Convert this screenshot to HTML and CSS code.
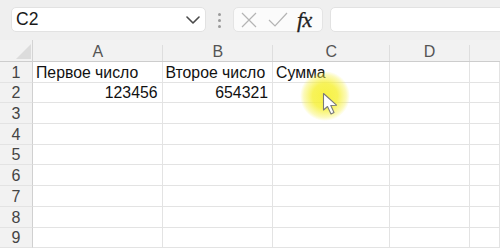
FILE: index.html
```html
<!DOCTYPE html>
<html lang="ru">
<head>
<meta charset="utf-8">
<link rel="stylesheet" href="styles.css">
</head>
<body>
<div class="toolbar">
  <div class="namebox">
    <span class="ref">C2</span>
    <svg class="chev" width="14" height="8" viewBox="0 0 14 8"><path d="M1 1 L7 7 L13 1" fill="none" stroke="#4a4a4a" stroke-width="1.6" stroke-linecap="round" stroke-linejoin="round"/></svg>
  </div>
  <div class="dots"><i></i><i></i><i></i></div>
  <div class="fbtns">
    <svg class="ico" width="18" height="16" viewBox="0 0 18 16"><path d="M2 1 L16 15 M16 1 L2 15" fill="none" stroke="#b4b4b4" stroke-width="1.2"/></svg>
    <svg class="ico chk" width="20" height="16" viewBox="0 0 20 16"><path d="M1 8 L7 14 L19 1" fill="none" stroke="#b4b4b4" stroke-width="1.2"/></svg>
    <span class="fx">fx</span>
  </div>
  <div class="finput"></div>
</div>
<div class="sheet">
  <div class="corner"><span class="tri"></span></div>
  <div class="colh">A</div>
  <div class="colh">B</div>
  <div class="colh">C</div>
  <div class="colh">D</div>
  <div class="colh last"></div>

  <div class="rowh">1</div>
  <div class="cell">Первое число</div>
  <div class="cell">Второе число</div>
  <div class="cell">Сумма</div>
  <div class="cell"></div>
  <div class="cell"></div>

  <div class="rowh">2</div>
  <div class="cell num">123456</div>
  <div class="cell num">654321</div>
  <div class="cell"></div>
  <div class="cell"></div>
  <div class="cell"></div>

  <div class="rowh">3</div><div class="cell"></div><div class="cell"></div><div class="cell"></div><div class="cell"></div><div class="cell"></div>
  <div class="rowh">4</div><div class="cell"></div><div class="cell"></div><div class="cell"></div><div class="cell"></div><div class="cell"></div>
  <div class="rowh">5</div><div class="cell"></div><div class="cell"></div><div class="cell"></div><div class="cell"></div><div class="cell"></div>
  <div class="rowh">6</div><div class="cell"></div><div class="cell"></div><div class="cell"></div><div class="cell"></div><div class="cell"></div>
  <div class="rowh">7</div><div class="cell"></div><div class="cell"></div><div class="cell"></div><div class="cell"></div><div class="cell"></div>
  <div class="rowh">8</div><div class="cell"></div><div class="cell"></div><div class="cell"></div><div class="cell"></div><div class="cell"></div>
  <div class="rowh">9</div><div class="cell"></div><div class="cell"></div><div class="cell"></div><div class="cell"></div><div class="cell"></div>
</div>
<div class="glow"></div>
<svg class="cursor" width="20" height="26" viewBox="0 0 20 26"><path d="M1.5 1.5 L1.5 18 L5.5 14.5 L9 22 L12 20.5 L8.8 13.5 L14.5 13.2 Z" fill="#ffffff" stroke="#7a7a7a" stroke-width="1.1" stroke-linejoin="round"/></svg>
</body>
</html>
```
FILE: styles.css
```css
html, body {
  margin: 0;
  padding: 0;
  background: #ffffff;
  width: 500px;
  height: 250px;
  overflow: hidden;
  font-family: "Liberation Sans", Arial, sans-serif;
}

.toolbar {
  height: 40px;
  background: #efefef;
  display: flex;
  align-items: flex-start;
  padding: 7px 0 0 11px;
  box-sizing: border-box;
}

.namebox {
  width: 195px;
  height: 25px;
  background: #ffffff;
  border: 1px solid #e2e2e2;
  border-radius: 5px;
  box-sizing: border-box;
  display: flex;
  align-items: center;
  justify-content: space-between;
  padding: 0 5px 0 4px;
}

.ref {
  font-size: 17.5px;
  color: #1a1a1a;
  line-height: 1;
}

.chev {
  display: block;
}

.dots {
  width: 4px;
  margin-left: 12px;
  display: flex;
  flex-direction: column;
  gap: 3px;
  padding-top: 6px;
}

.dots i {
  display: block;
  width: 3px;
  height: 3px;
  border-radius: 50%;
  background: #9a9a9a;
}

.fbtns {
  margin-left: 11px;
  width: 90px;
  height: 25px;
  background: #fbfbfb;
  border: 1px solid #e4e4e4;
  border-radius: 5px;
  box-sizing: border-box;
  display: flex;
  align-items: center;
  padding-left: 6px;
}

.ico {
  display: block;
}

.chk {
  margin-left: 10px;
}

.fx {
  margin-left: 9px;
  font-family: "Liberation Serif", "Times New Roman", serif;
  font-style: italic;
  font-size: 22px;
  color: #222222;
  line-height: 1;
  letter-spacing: -0.5px;
  -webkit-text-stroke: 0.3px #222222;
}

.finput {
  flex: 1;
  margin-left: 7px;
  margin-right: -8px;
  height: 25px;
  background: #ffffff;
  border: 1px solid #e2e2e2;
  border-radius: 5px;
  box-sizing: border-box;
}

.sheet {
  display: grid;
  grid-template-columns: 33px 129.5px 110.5px 116.5px 80px 1fr;
  grid-template-rows: 22px;
  grid-auto-rows: 20.7px;
}

.corner {
  background: #f2f2f2;
  border-bottom: 1px solid #cdcdcd;
  border-right: 1px solid #d4d4d4;
  position: relative;
}

.tri {
  position: absolute;
  right: 1px;
  bottom: 2px;
  width: 0;
  height: 0;
  border-left: 15px solid transparent;
  border-bottom: 15px solid #dcdcdc;
}

.colh {
  background: #f2f2f2;
  border-bottom: 1px solid #cdcdcd;
  position: relative;
  display: flex;
  align-items: center;
  justify-content: center;
  font-size: 16px;
  color: #555555;
  padding-top: 3px;
  box-sizing: border-box;
}

.colh::after {
  content: "";
  position: absolute;
  right: 0;
  top: 5px;
  bottom: 0;
  width: 1px;
  background: #dedede;
}

.colh.last::after {
  display: none;
}

.rowh {
  background: #f2f2f2;
  border-right: 1px solid #d0d0d0;
  border-bottom: 1px solid #e3e3e3;
  box-sizing: border-box;
  display: flex;
  align-items: flex-end;
  justify-content: center;
  font-size: 16px;
  color: #444444;
  padding-bottom: 0;
}

.cell {
  border-right: 1px solid #e3e3e3;
  border-bottom: 1px solid #e3e3e3;
  box-sizing: border-box;
  display: flex;
  align-items: flex-end;
  padding: 0 3px 0 3px;
  font-size: 15.8px;
  color: #111111;
  white-space: nowrap;
  overflow: visible;
}

.cell.num {
  justify-content: flex-end;
  padding-right: 4px;
}

.glow {
  position: absolute;
  left: 300px;
  top: 71px;
  width: 50px;
  height: 50px;
  border-radius: 50%;
  background: radial-gradient(circle closest-side, rgba(246, 240, 48, 0.9) 0%, rgba(246, 240, 48, 0.8) 50%, rgba(246, 240, 60, 0.35) 85%, rgba(246, 240, 60, 0) 100%);
  pointer-events: none;
}

.cursor {
  position: absolute;
  left: 322px;
  top: 92px;
}
```
